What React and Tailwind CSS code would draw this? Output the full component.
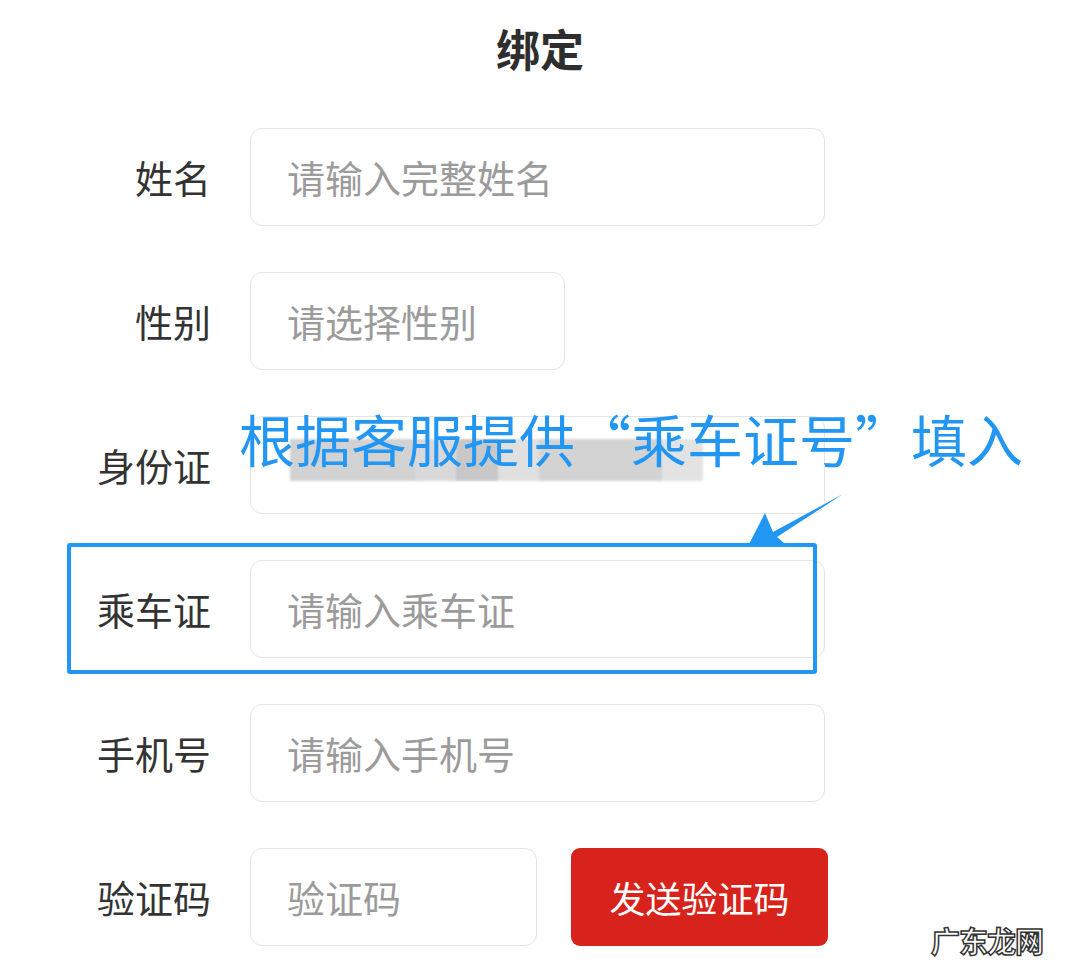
import React from "react";

const font = { fontFamily: '"Noto Sans CJK SC", "Noto Sans", sans-serif' };

function Field({ label, placeholder, width, children }) {
  return (
    <div className="flex items-center h-[98px]">
      <div className="w-[211px] text-right text-[38px] leading-none text-[#333333]">{label}</div>
      <div
        className="ml-[39px] h-[98px] rounded-[12px] border border-[#e4e4e4] flex items-center pl-[36px] text-[38px] leading-none text-[#9b9b9b] relative overflow-hidden"
        style={{ width }}
      >
        {placeholder}
        {children}
      </div>
    </div>
  );
}

export default function App() {
  return (
    <div className="w-[1080px] h-[967px] bg-white relative overflow-hidden" style={font}>
      <div className="pt-[20px] text-center text-[44px] leading-[56px] font-bold text-[#2e2e2e]">绑定</div>

      <div className="mt-[52px] flex flex-col gap-[46px]">
        <Field label="姓名" placeholder="请输入完整姓名" width="575px" />
        <Field label="性别" placeholder="请选择性别" width="315px" />
        <Field label="身份证" placeholder="" width="575px">
          <div className="absolute left-[39px] top-[22px] h-[42px] flex blur-[1px]">
            <div className="w-[125px] bg-[#d2d2d2]" />
            <div className="w-[41px] bg-[#d9d9d9]" />
            <div className="w-[42px] bg-[#c8c8c8]" />
            <div className="w-[41px] bg-[#e0e0e0]" />
            <div className="w-[123px] bg-[#d3d3d3]" />
            <div className="w-[41px] bg-[#e3e3e3]" />
          </div>
        </Field>
        <Field label="乘车证" placeholder="请输入乘车证" width="575px" />
        <Field label="手机号" placeholder="请输入手机号" width="575px" />
        <div className="flex items-center h-[98px]">
          <div className="w-[211px] text-right text-[38px] leading-none text-[#333333]">验证码</div>
          <div className="ml-[39px] w-[287px] h-[98px] rounded-[12px] border border-[#e4e4e4] flex items-center pl-[36px] text-[38px] leading-none text-[#9b9b9b]">
            验证码
          </div>
          <div className="ml-[34px] w-[257px] h-[98px] rounded-[9px] bg-[#d8231c] flex items-center justify-center text-[36px] leading-none text-white">
            发送验证码
          </div>
        </div>
      </div>

      {/* annotation overlays */}
      <div className="absolute left-[67px] top-[543px] w-[750px] h-[131px] border-4 border-[#2196f3] rounded-[3px]" />
      <div className="absolute left-[239px] top-[410px] text-[56px] leading-[56px] text-[#2196f3] whitespace-nowrap">
        根据客服提供“乘车证号”填入
      </div>
      <svg className="absolute left-0 top-0" width="1080" height="967" viewBox="0 0 1080 967">
        <polygon points="843,494 773,532 765,513 749,544 784,543 777,537" fill="#2196f3" />
      </svg>

      <div
        className="absolute left-[931px] top-[920px] text-[29px] leading-[40px] font-bold text-white tracking-[-1px] [-webkit-text-stroke:1.5px_#333333]"
      >
        广东龙网
      </div>
    </div>
  );
}
